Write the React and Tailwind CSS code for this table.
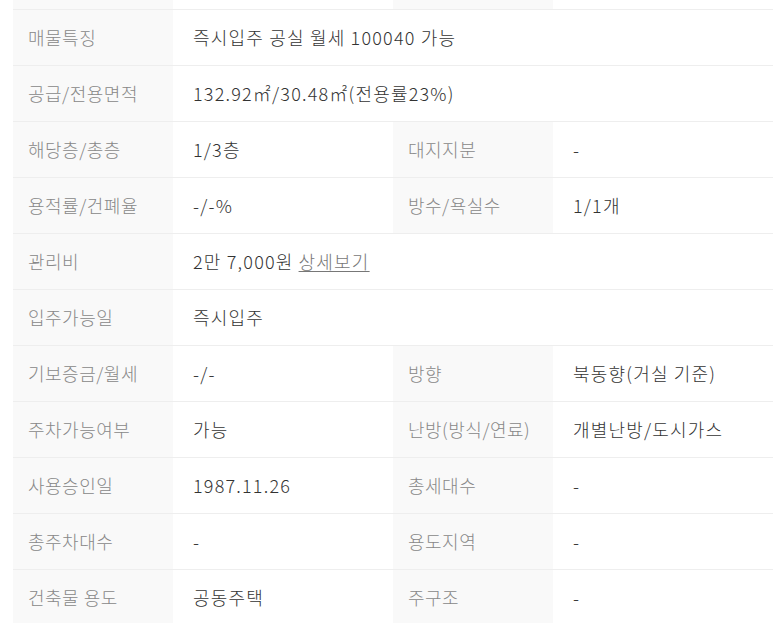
const rows = [
  { label: '매물특징', value: '즉시입주 공실 월세 100040 가능' },
  { label: '공급/전용면적', value: '132.92㎡/30.48㎡(전용률23%)' },
  { label: '해당층/총층', value: '1/3층', label2: '대지지분', value2: '-' },
  { label: '용적률/건폐율', value: '-/-%', label2: '방수/욕실수', value2: '1/1개' },
  { label: '관리비', value: '2만 7,000원', link: '상세보기' },
  { label: '입주가능일', value: '즉시입주' },
  { label: '기보증금/월세', value: '-/-', label2: '방향', value2: '북동향(거실 기준)' },
  { label: '주차가능여부', value: '가능', label2: '난방(방식/연료)', value2: '개별난방/도시가스' },
  { label: '사용승인일', value: '1987.11.26', label2: '총세대수', value2: '-' },
  { label: '총주차대수', value: '-', label2: '용도지역', value2: '-' },
  { label: '건축물 용도', value: '공동주택', label2: '주구조', value2: '-' },
];

function Label({ children }) {
  return (
    <div className="w-[160px] shrink-0 bg-[#f9f9f9] pl-[15px] flex items-center text-[#888] tracking-[0.5px]">
      {children}
    </div>
  );
}

export default function App() {
  return (
    <div className="bg-white min-h-[623px] overflow-hidden pl-[13px] text-[18px] font-light tracking-[1.2px] font-['Noto_Sans_CJK_KR','Noto_Sans',sans-serif]">
      <div className="w-[760px]">
        <div className="flex h-[10px] border-b border-[#eeeeee]">
          <div className="w-[160px] bg-[#f9f9f9]" />
          <div className="w-[220px]" />
          <div className="w-[160px] bg-[#f9f9f9]" />
          <div className="w-[220px]" />
        </div>
        {rows.map((r) => (
          <div key={r.label} className="flex h-[56px] border-b border-[#eeeeee]">
            <Label>{r.label}</Label>
            {r.label2 ? (
              <>
                <div className="w-[220px] shrink-0 pl-5 flex items-center text-[#333]">{r.value}</div>
                <Label>{r.label2}</Label>
                <div className="w-[220px] shrink-0 pl-5 flex items-center text-[#333]">{r.value2}</div>
              </>
            ) : (
              <div className="flex-1 pl-5 flex items-center text-[#333] whitespace-pre">
                {r.value}
                {r.link && <a className="ml-[5px] text-[#777] underline underline-offset-2">{r.link}</a>}
              </div>
            )}
          </div>
        ))}
      </div>
    </div>
  );
}
